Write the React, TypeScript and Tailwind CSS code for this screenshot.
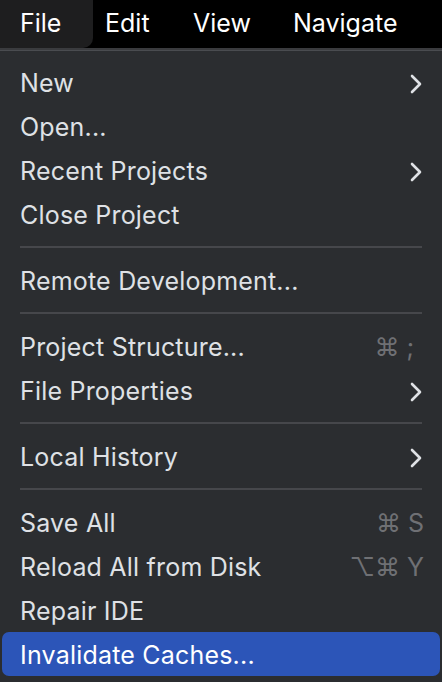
type Item =
  | { kind: "item"; label: string; sub?: boolean; keys?: string; keysPad?: boolean; active?: boolean }
  | { kind: "sep" };

const items: Item[] = [
  { kind: "item", label: "New", sub: true },
  { kind: "item", label: "Open..." },
  { kind: "item", label: "Recent Projects", sub: true },
  { kind: "item", label: "Close Project" },
  { kind: "sep" },
  { kind: "item", label: "Remote Development..." },
  { kind: "sep" },
  { kind: "item", label: "Project Structure...", keys: "⌘ ;", keysPad: true },
  { kind: "item", label: "File Properties", sub: true },
  { kind: "sep" },
  { kind: "item", label: "Local History", sub: true },
  { kind: "sep" },
  { kind: "item", label: "Save All", keys: "⌘ S" },
  { kind: "item", label: "Reload All from Disk", keys: "⌥⌘ Y" },
  { kind: "item", label: "Repair IDE" },
  { kind: "item", label: "Invalidate Caches...", active: true },
];

function Chevron() {
  return (
    <svg width="14" height="20" viewBox="0 0 14 20" className="mr-[1px]">
      <polyline
        points="3,2 11,10 3,18"
        fill="none"
        stroke="#dfe1e5"
        strokeWidth="2.6"
        strokeLinecap="round"
        strokeLinejoin="round"
      />
    </svg>
  );
}

export default function App() {
  return (
    <div
      className="w-[442px] h-[682px] overflow-hidden bg-[#2b2d30] text-[#dfe1e5] antialiased"
      style={{ fontFamily: "Inter, 'Noto Sans', sans-serif" }}
    >
      {/* menu bar */}
      <div className="h-[48px] bg-black flex items-center text-[25px] text-white whitespace-nowrap">
        <div className="h-full w-[93px] shrink-0 bg-[#1e1e1f] rounded-br-[10px] flex items-center pl-[20px]">
          File
        </div>
        <span className="ml-[12px] w-[88px] shrink-0">Edit</span>
        <span className="w-[100px] shrink-0">View</span>
        <span className="shrink-0">Navigate</span>
      </div>
      <div className="h-[2px] bg-[#3a3b3e]" />
      <div className="border-t border-[#4a4c50] pt-[9px]">
        {items.map((it, i) =>
          it.kind === "sep" ? (
            <div key={i} className="px-[20px] py-[10px]">
              <div className="h-[2px] bg-[#46474b]" />
            </div>
          ) : (
            <div
              key={i}
              className={`h-[44px] mx-[2px] pl-[18px] pr-[16px] pt-[3px] flex items-center justify-between text-[25px] tracking-[0.2px] rounded-[7px] ${
                it.active ? "bg-[#2c55b8] text-white" : ""
              }`}
            >
              <span>{it.label}</span>
              {it.sub && <Chevron />}
              {it.keys && (
                <span className={`text-[#6f7074] tracking-[0px] ${it.keysPad ? "mr-[10px]" : ""}`}>
                  {it.keys}
                </span>
              )}
            </div>
          )
        )}
      </div>
    </div>
  );
}
